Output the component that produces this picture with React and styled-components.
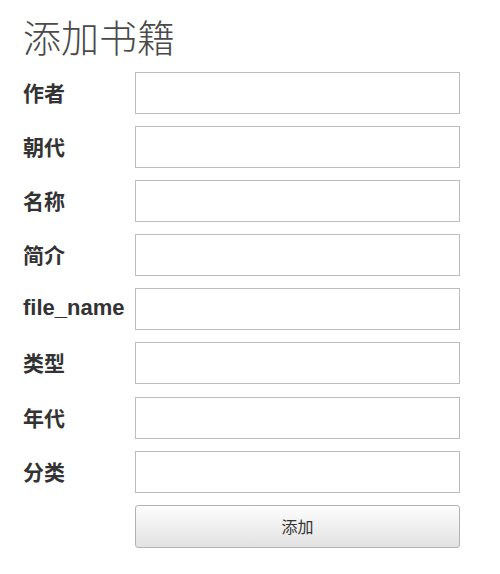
import React from "react";
import styled, { createGlobalStyle } from "styled-components";

const Global = createGlobalStyle`
  html, body { margin: 0; padding: 0; background: #fff; }
  body { font-family: "Liberation Sans", "Noto Sans CJK SC", sans-serif; }
`;

const Page = styled.div`
  box-sizing: border-box;
  min-height: 574px;
  padding: 18px 0 24px 23px;
  width: 460px;
`;

const Title = styled.h1`
  margin: 0 0 12px 0;
  font-family: "Liberation Sans", "Noto Sans CJK SC", sans-serif;
  font-weight: 300;
  font-size: 38px;
  line-height: 42px;
  color: #4a4a4a;
`;

const Form = styled.form`
  display: grid;
  grid-template-columns: 112px 325px;
  grid-auto-rows: 42px;
  row-gap: 12.1px;
  align-items: center;
`;

const Label = styled.label`
  font-family: "Liberation Sans", "Noto Sans CJK SC", sans-serif;
  font-weight: bold;
  font-size: ${(p) => (p.$latin ? "22px" : "21px")};
  color: #333;
  white-space: nowrap;
  margin-top: -2px;
`;

const Input = styled.input`
  box-sizing: border-box;
  width: 100%;
  height: 42px;
  border: 1px solid #bdbdbd;
  border-radius: 0;
  background: #fff;
  padding: 4px 8px;
  font-size: 16px;
  outline: none;
`;

const Button = styled.button`
  grid-column: 2;
  box-sizing: border-box;
  height: 43px;
  margin-top: 1px;
  border: 1px solid #b3b3b3;
  border-radius: 3px;
  background: linear-gradient(#fdfdfd, #e2e2e2);
  font-family: "Noto Sans CJK SC", sans-serif;
  font-size: 16px;
  color: #333;
  cursor: pointer;
`;

const fields = ["作者", "朝代", "名称", "简介", "file_name", "类型", "年代", "分类"];

export default function App() {
  return (
    <>
      <Global />
      <Page>
        <Title>添加书籍</Title>
        <Form onSubmit={(e) => e.preventDefault()}>
          {fields.map((f) => (
            <React.Fragment key={f}>
              <Label $latin={/^[a-z_]+$/.test(f)}>{f}</Label>
              <Input type="text" />
            </React.Fragment>
          ))}
          <Button type="submit">添加</Button>
        </Form>
      </Page>
    </>
  );
}
